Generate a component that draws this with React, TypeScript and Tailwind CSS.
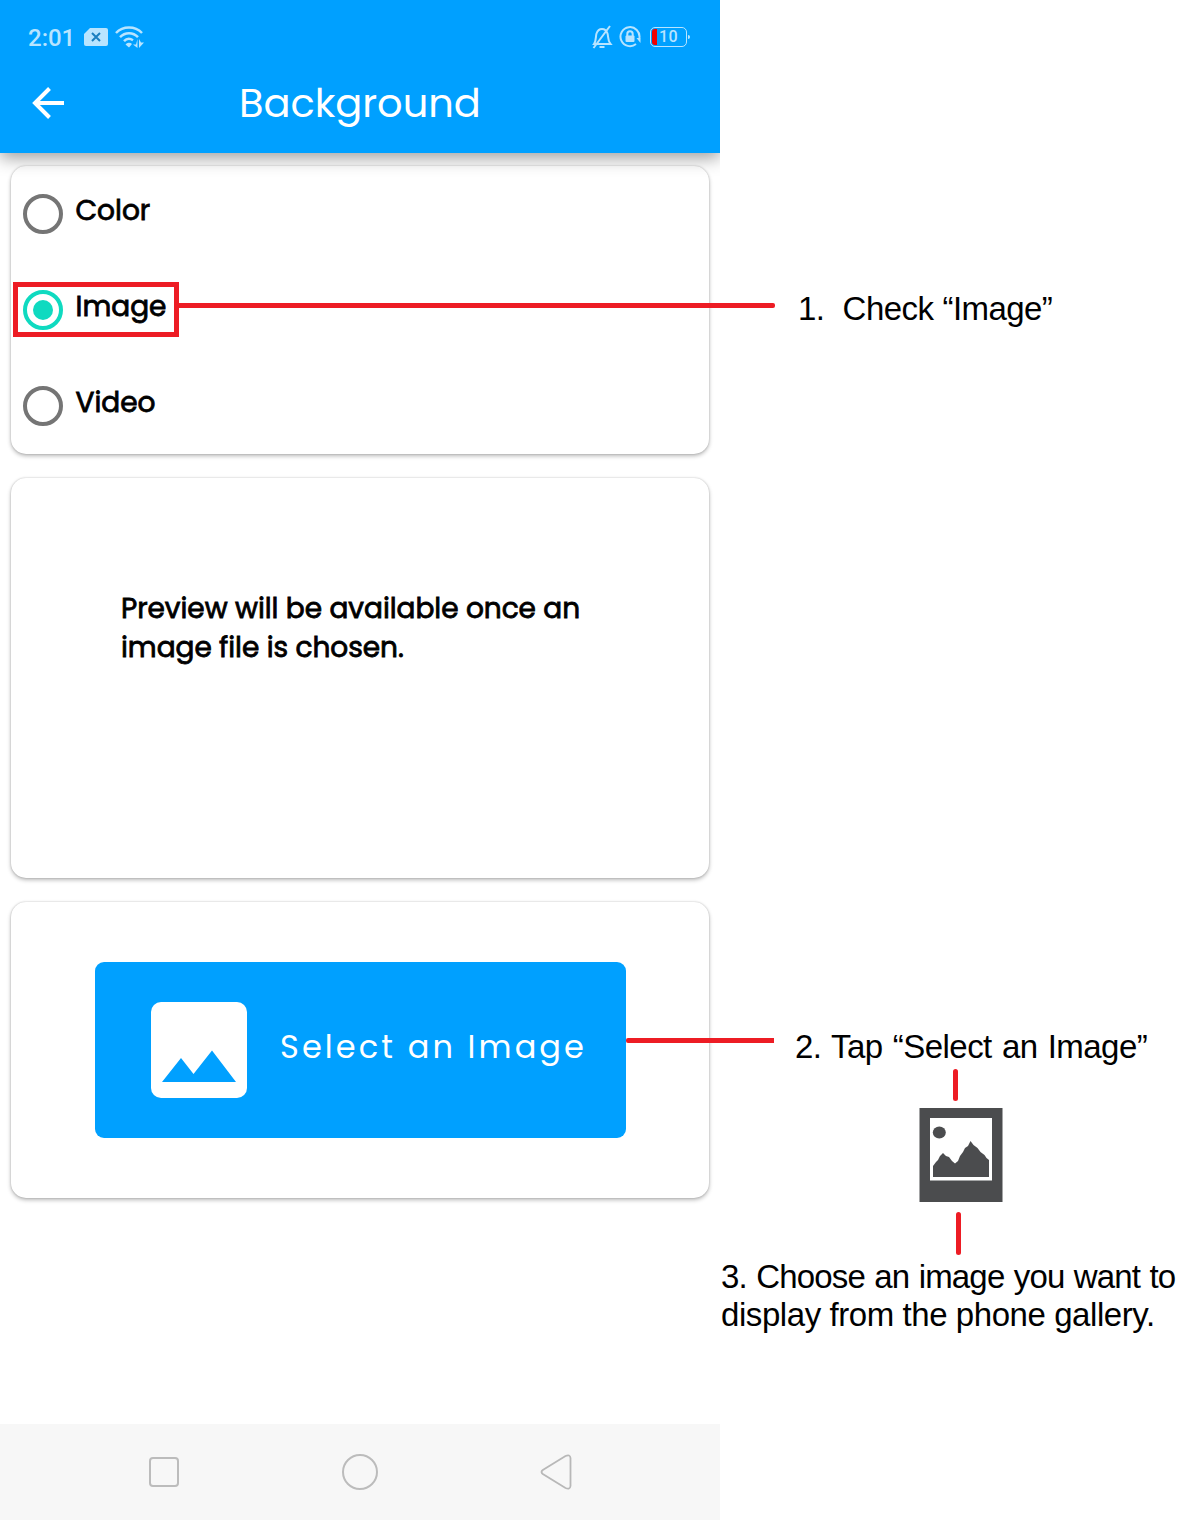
import type { ReactNode } from "react";

const poppins = "font-['Poppins','Inter',sans-serif]";

function StatusBar() {
  return (
    <div className="flex h-[53px] items-center pt-[21px] pr-[30px] pl-[28px] text-[#b8e4ff]">
      <span className="w-[56px] pt-[2px] font-['Roboto',sans-serif] text-[24px] leading-8 font-medium whitespace-nowrap">2:01</span>
      <svg width="24" height="20" viewBox="0 0 24 20">
        <path fill="currentColor" d="M6 1h16a2 2 0 0 1 2 2v14a2 2 0 0 1-2 2H2a2 2 0 0 1-2-2V7z" />
        <path stroke="#1a7fc0" strokeWidth="2" d="M8 6l8 8M16 6l-8 8" />
      </svg>
      <svg className="ml-[7px]" width="30" height="24" viewBox="0 0 30 24" fill="none" stroke="currentColor" strokeWidth="2.5">
        <path d="M1 8C8 .8 20 .8 27 8M5 12.200c5-5.200 13-5.200 18 0M9 16.200c2.500-2.700 6-3 9-1" />
        <path fill="currentColor" stroke="none" d="M10.500 19.500a4.500 4.500 0 0 1 6.500-.5l-3 3.500zM22.500 14v9l-4.500-3.500h3zM24 14v9l5-5.500h-3z" />
      </svg>
      <div className="flex-1" />
      <svg width="22" height="24" viewBox="0 0 22 24" fill="none" stroke="currentColor" strokeWidth="2">
        <path d="M2 19C4.500 15.500 3.500 11.500 4.500 8.500 5.500 5.500 7 4 10 4s4.500 1.500 5.500 4.500c1 3 0 7 3 10.500zM7.500 22h5M18 1L1.500 23" />
      </svg>
      <svg className="ml-[5px]" width="22" height="22" viewBox="0 0 22 22" fill="none" stroke="currentColor" strokeWidth="2">
        <path d="M17 18a9.500 9.500 0 1 1 3.400-6" />
        <path fill="currentColor" stroke="none" d="M17.500 12h4v5z" />
        <rect x="6.500" y="9.500" width="9" height="6.500" rx="1" fill="currentColor" stroke="none" />
        <path d="M8.300 10V8a2.700 2.700 0 0 1 5.400 0v2" />
      </svg>
      <div className="ml-[9px] flex h-[20px] w-[37px] items-center rounded-[5px] border border-current pl-px">
        <span className="h-[16px] w-[5px] rounded-l-[3px] bg-[#f00000]" />
        <span className="ml-[2px] font-['Roboto',sans-serif] text-[16px] leading-4 font-medium tracking-[0.3px]">10</span>
      </div>
      <span className="ml-px h-[4px] w-[2px] rounded-r bg-current" />
    </div>
  );
}

function Header() {
  return (
    <header className="relative z-10 h-[153px] bg-[#00a0ff] shadow-[0_5px_16px_rgba(0,0,0,0.38)] [clip-path:inset(0_0_-40px_0)]">
      <StatusBar />
      <div className="flex h-[100px] items-center pl-[32px]">
        <svg width="32" height="32" viewBox="0 0 32 32" fill="none" stroke="#fff" strokeWidth="4">
          <path d="M32 16H3M17.500 1.500L3 16l14.500 14.500" />
        </svg>
        <h1 className={`${poppins} ml-[175px] pb-px text-[40px] leading-[48px] tracking-[-0.050px] whitespace-nowrap text-white`}>Background</h1>
      </div>
    </header>
  );
}

function Card({ className, children }: { className: string; children: ReactNode }) {
  return (
    <section className={`mx-[11px] rounded-[15px] bg-white shadow-[0_2px_4px_rgba(0,0,0,0.28),0_0_2px_rgba(0,0,0,0.2)] ${className}`}>
      {children}
    </section>
  );
}

function Option({ label, checked = false }: { label: string; checked?: boolean }) {
  return (
    <div className="relative flex h-[96px] items-center pl-[12px]">
      <span className={`flex size-[40px] items-center justify-center rounded-full border-4 ${checked ? "border-[#0fdac0]" : "border-[#757575]"}`}>
        {checked && <span className="size-[20px] rounded-full bg-[#0fdac0]" />}
      </span>
      <span className={`${poppins} ml-[12.500px] pb-[6px] text-[28px] leading-[36px] whitespace-nowrap text-black [-webkit-text-stroke:0.800px_#000]`}>{label}</span>
      {checked && (
        <>
          <span className="absolute top-[20px] left-[2px] h-[55px] w-[166px] border-5 border-[#ed1c24]" />
          <span className="absolute top-[41px] left-[168px] h-[5px] w-[596px] rounded-r-[2px] bg-[#ed1c24]" />
        </>
      )}
    </div>
  );
}

function NavBar() {
  return (
    <nav className="mt-auto flex h-[96px] items-center bg-[#f7f7f7] pl-[149px]">
      <span className="size-[30px] rounded-[4px] border-2 border-[#bcbcbc]" />
      <span className="ml-[163px] size-[36px] rounded-full border-2 border-[#bcbcbc]" />
      <svg className="ml-[162px]" width="32" height="36" viewBox="0 0 32 36" fill="none" stroke="#b8b8b8" strokeWidth="1.800">
        <path d="M2.800 16L25.500 2q4.500-2 5 2v28q-.5 4-5 2L2.800 20q-2.600-2 0-4z" />
      </svg>
    </nav>
  );
}

function Notes() {
  return (
    <aside className="w-[476px] font-['Liberation_Sans',Arial,sans-serif] text-[33px] leading-[38px] whitespace-pre text-black">
      <p className="mt-[290px] ml-[78px] w-max tracking-[-0.560px] [word-spacing:0.500px]">{"1.  Check “Image”"}</p>
      <p className="mt-[700px] ml-[75px] w-max tracking-[-0.530px] [word-spacing:1.500px]">2. Tap “Select an Image”</p>
      <span className="mt-[3px] ml-[233px] block h-[32px] w-[5px] rounded-full bg-[#ed1c24]" />
      <svg className="mt-[7px] ml-[199px]" width="84" height="94" viewBox="0 0 84 94">
        <path fill="#4b4c4e" d="M0.500 0h83v94h-83z" />
        <path fill="#fff" d="M11 10h62v62.500H11z" />
        <ellipse cx="20.300" cy="24.500" rx="6.500" ry="6" fill="#4b4c4e" />
        <path fill="#4b4c4e" d="M14 69V58l3-4 2-2 2-4 3-3 3 3 3 1 3 4 3 2.500 3-2.500 2-5 3-4 2-4 3-2 2.500-5 3 4 4 3 3 4 4 3 2 3 2.500 2V69z" />
      </svg>
      <span className="mt-[10px] ml-[236px] block h-[43px] w-[5px] rounded-full bg-[#ed1c24]" />
      <p className="mt-[3px] ml-px w-max tracking-[-0.830px] [word-spacing:1px]">3. Choose an image you want to</p>
      <p className="ml-px w-max tracking-[-0.430px]">display from the phone gallery.</p>
    </aside>
  );
}

export default function App() {
  return (
    <div className="flex h-[1520px] w-[1196px] overflow-hidden bg-white">
      <main className="relative z-10 flex w-[720px] flex-col">
        <Header />
        <Card className="mt-[13px] h-[288px]">
          <Option label="Color" />
          <Option label="Image" checked />
          <Option label="Video" />
        </Card>
        <Card className="mt-[24px] h-[400px] pt-[111px] pl-[110px]">
          <p className={`${poppins} text-[28px] leading-[39px] tracking-[-0.050px] text-black [-webkit-text-stroke:0.800px_#000]`}>
            Preview will be available once an
            <br />
            image file is chosen.
          </p>
        </Card>
        <Card className="relative mt-[24px] h-[296px] pt-[60px] pl-[84px]">
          <button className="flex h-[176px] w-[531px] items-center rounded-[9px] bg-[#00a0ff] pl-[56px]">
            <svg width="96" height="96" viewBox="0 0 96 96">
              <rect width="96" height="96" rx="10" fill="#fff" />
              <path fill="#00a0ff" d="M11 80l19-24 12.500 16L61 48.500 85 80z" />
            </svg>
            <span className={`${poppins} ml-[33px] pb-[6px] text-[32px] leading-[40px] tracking-[3.100px] whitespace-nowrap text-white`}>Select an Image</span>
          </button>
          <span className="absolute top-[136px] left-[615px] h-[5px] w-[148px] rounded-l-[2px] bg-[#ed1c24]" />
        </Card>
        <NavBar />
      </main>
      <Notes />
    </div>
  );
}
